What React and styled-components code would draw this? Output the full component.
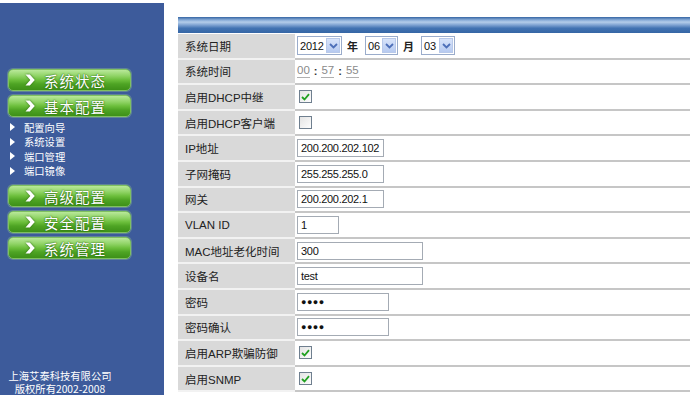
import React from "react";
import styled, { createGlobalStyle } from "styled-components";

const Global = createGlobalStyle`
  html, body { margin: 0; padding: 0; background: #fff; }
  body { font-family: "Liberation Sans", "Noto Sans CJK SC", sans-serif; }
`;

const Page = styled.div`
  display: flex;
  width: 700px;
  height: 395px;
  overflow: hidden;
  background: #fff;
`;

const Sidebar = styled.div`
  width: 164px;
  margin-top: 3px;
  background: #3d5b9b;
  display: flex;
  flex-direction: column;
  padding-top: 66px;
  box-sizing: border-box;
`;

const NavButton = styled.div`
  margin-left: 8px;
  width: 123px;
  height: 22px;
  box-sizing: border-box;
  border-radius: 5px;
  border: 1px solid #7fc060;
  background: linear-gradient(
    to bottom,
    #b9e89a 0%,
    #8fd365 30%,
    #6cbf3c 50%,
    #4ea424 70%,
    #3d9018 100%
  );
  box-shadow: 0 0 0 1px rgba(160, 210, 140, 0.35);
  display: flex;
  align-items: center;
  padding-left: 16px;
  margin-bottom: ${(p) => p.$mb || 4}px;
  color: #fff;
  font-family: "Noto Sans CJK SC", sans-serif;
  font-size: 14.5px;
  letter-spacing: 1px;
  text-shadow: 0 0 2px #2d6a12, 0 0 1px #2d6a12;
  svg { margin-right: 9px; filter: drop-shadow(0 0 1px #2d6a12); }
`;

const SubList = styled.ul`
  list-style: none;
  margin: 0 0 7px 0;
  padding: 0;
`;

const SubItem = styled.li`
  height: 14.5px;
  display: flex;
  align-items: center;
  padding-left: 10px;
  color: #fff;
  font-family: "Noto Sans CJK SC", sans-serif;
  font-size: 10.3px;
  &::before {
    content: "";
    width: 0;
    height: 0;
    border-top: 4px solid transparent;
    border-bottom: 4px solid transparent;
    border-left: 5px solid #fff;
    margin-right: 9px;
  }
`;

const Footer = styled.div`
  margin-top: auto;
  width: 120px;
`;

const FooterLine = styled.div`
  height: 13px;
  line-height: 13px;
  overflow: hidden;
  text-align: center;
  color: #fff;
  font-family: "Noto Sans CJK SC", sans-serif;
  font-size: 10.3px;
  white-space: nowrap;
`;

const Main = styled.div`
  flex: 1;
  padding: 17px 10px 0 14px;
  box-sizing: border-box;
`;

const HeaderBar = styled.div`
  height: 16px;
  background: linear-gradient(
    to bottom,
    #3565a3 0%,
    #86aad6 18%,
    #b4cdea 32%,
    #7fa3d2 50%,
    #4273b2 70%,
    #3566a5 100%
  );
  margin-bottom: 1px;
`;

const Row = styled.div`
  display: flex;
  height: 25.6px;
`;

const Label = styled.div`
  width: 117px;
  flex: none;
  box-sizing: border-box;
  background: #d9d9d9;
  border-bottom: 2px solid #f2f2f2;
  padding-left: 7px;
  display: flex;
  align-items: center;
  color: #222;
  font-size: 11.5px;
  font-family: "Liberation Sans", "Noto Sans CJK SC", sans-serif;
`;

const Value = styled.div`
  flex: 1;
  box-sizing: border-box;
  border-bottom: 2px solid #c6c6c6;
  padding-left: 2px;
  display: flex;
  align-items: center;
  font-size: 11px;
  color: #000;
`;

const TextBox = styled.div`
  width: ${(p) => p.$w}px;
  height: 18px;
  box-sizing: border-box;
  border: 1px solid #a4abb4;
  background: #fff;
  display: flex;
  align-items: center;
  padding-left: 3px;
  font-family: "Liberation Sans", sans-serif;
  font-size: 11px;
  letter-spacing: -0.3px;
  color: #111;
`;

const Dots = styled.span`
  font-size: 9px;
  letter-spacing: 0.5px;
  font-weight: bold;
`;

const SelectBox = styled.div`
  width: ${(p) => p.$w}px;
  height: 19px;
  box-sizing: border-box;
  border: 1px solid #9aaccb;
  background: #fff;
  display: flex;
  align-items: center;
  justify-content: space-between;
  padding-left: 2px;
  font-family: "Liberation Sans", sans-serif;
  font-size: 11px;
  letter-spacing: -0.2px;
  color: #111;
`;

const SelectArrow = styled.span`
  width: 14px;
  height: 15px;
  flex: none;
  margin-right: 1px;
  background: linear-gradient(to bottom, #d8e4fa, #b7caf0);
  border: 1px solid #b8c9ea;
  box-sizing: border-box;
  display: flex;
  align-items: center;
  justify-content: center;
`;

const Unit = styled.span`
  font-family: "Noto Sans CJK SC", sans-serif;
  font-weight: bold;
  font-size: 11px;
  margin: 0 7px 0 5px;
  color: #222;
`;

const TimePart = styled.span`
  color: #8a8a8a;
  font-family: "Liberation Sans", sans-serif;
  font-size: 11.5px;
  border-bottom: 1px solid #b0b0b0;
  line-height: 13px;
`;

const Colon = styled.span`
  font-weight: bold;
  color: #333;
  margin: 0 4px;
  font-size: 11px;
`;

const CheckBox = styled.span`
  width: 13px;
  height: 13px;
  margin-left: 2px;
  box-sizing: border-box;
  border: 1px solid #6f7f8f;
  background: linear-gradient(135deg, #e4e4e4, #fdfdfd);
  display: flex;
  align-items: center;
  justify-content: center;
`;

const Chevron = () => (
  <svg width="10" height="12" viewBox="0 0 10 12">
    <path d="M0.5 0.5 L4.8 0.5 L9.8 6 L4.8 11.5 L0.5 11.5 L5.3 6 Z" fill="#fff" />
  </svg>
);

const Arrow = () => (
  <svg width="9" height="6" viewBox="0 0 9 6">
    <path d="M1 1 L4.5 4.5 L8 1" stroke="#4d6fb8" strokeWidth="1.8" fill="none" />
  </svg>
);

const Check = ({ on }) => (
  <CheckBox>
    {on && (
      <svg width="9" height="8" viewBox="0 0 9 8">
        <path d="M1 4 L3.5 6.5 L8 1.2" stroke="#21a121" strokeWidth="1.8" fill="none" />
      </svg>
    )}
  </CheckBox>
);

const Select = ({ w, v }) => (
  <SelectBox $w={w}>
    {v}
    <SelectArrow>
      <Arrow />
    </SelectArrow>
  </SelectBox>
);

const nav1 = ["系统状态", "基本配置"];
const sub = ["配置向导", "系统设置", "端口管理", "端口镜像"];
const nav2 = ["高级配置", "安全配置", "系统管理"];

const rows = [
  {
    label: "系统日期",
    content: (
      <>
        <Select w={45} v="2012" />
        <Unit>年</Unit>
        <Select w={33} v="06" />
        <Unit>月</Unit>
        <Select w={34} v="03" />
      </>
    ),
  },
  {
    label: "系统时间",
    content: (
      <>
        <TimePart>00</TimePart>
        <Colon>:</Colon>
        <TimePart>57</TimePart>
        <Colon>:</Colon>
        <TimePart>55</TimePart>
      </>
    ),
  },
  { label: "启用DHCP中继", content: <Check on /> },
  { label: "启用DHCP客户端", content: <Check /> },
  { label: "IP地址", content: <TextBox $w={87}>200.200.202.102</TextBox> },
  { label: "子网掩码", content: <TextBox $w={87}>255.255.255.0</TextBox> },
  { label: "网关", content: <TextBox $w={87}>200.200.202.1</TextBox> },
  { label: "VLAN ID", content: <TextBox $w={42}>1</TextBox> },
  { label: "MAC地址老化时间", content: <TextBox $w={126}>300</TextBox> },
  { label: "设备名", content: <TextBox $w={126}>test</TextBox> },
  { label: "密码", content: <TextBox $w={92}><Dots>●●●●</Dots></TextBox> },
  { label: "密码确认", content: <TextBox $w={92}><Dots>●●●●</Dots></TextBox> },
  { label: "启用ARP欺骗防御", content: <Check on /> },
  { label: "启用SNMP", content: <Check on /> },
];

export default function App() {
  return (
    <>
      <Global />
      <Page>
        <Sidebar>
          {nav1.map((n, i) => (
            <NavButton key={n} $mb={i === 1 ? 3 : 4}>
              <Chevron />
              {n}
            </NavButton>
          ))}
          <SubList>
            {sub.map((s) => (
              <SubItem key={s}>{s}</SubItem>
            ))}
          </SubList>
          {nav2.map((n) => (
            <NavButton key={n}>
              <Chevron />
              {n}
            </NavButton>
          ))}
          <Footer>
            <FooterLine>上海艾泰科技有限公司</FooterLine>
            <FooterLine>版权所有2002-2008</FooterLine>
          </Footer>
        </Sidebar>
        <Main>
          <HeaderBar />
          {rows.map((r) => (
            <Row key={r.label}>
              <Label>{r.label}</Label>
              <Value>{r.content}</Value>
            </Row>
          ))}
        </Main>
      </Page>
    </>
  );
}
